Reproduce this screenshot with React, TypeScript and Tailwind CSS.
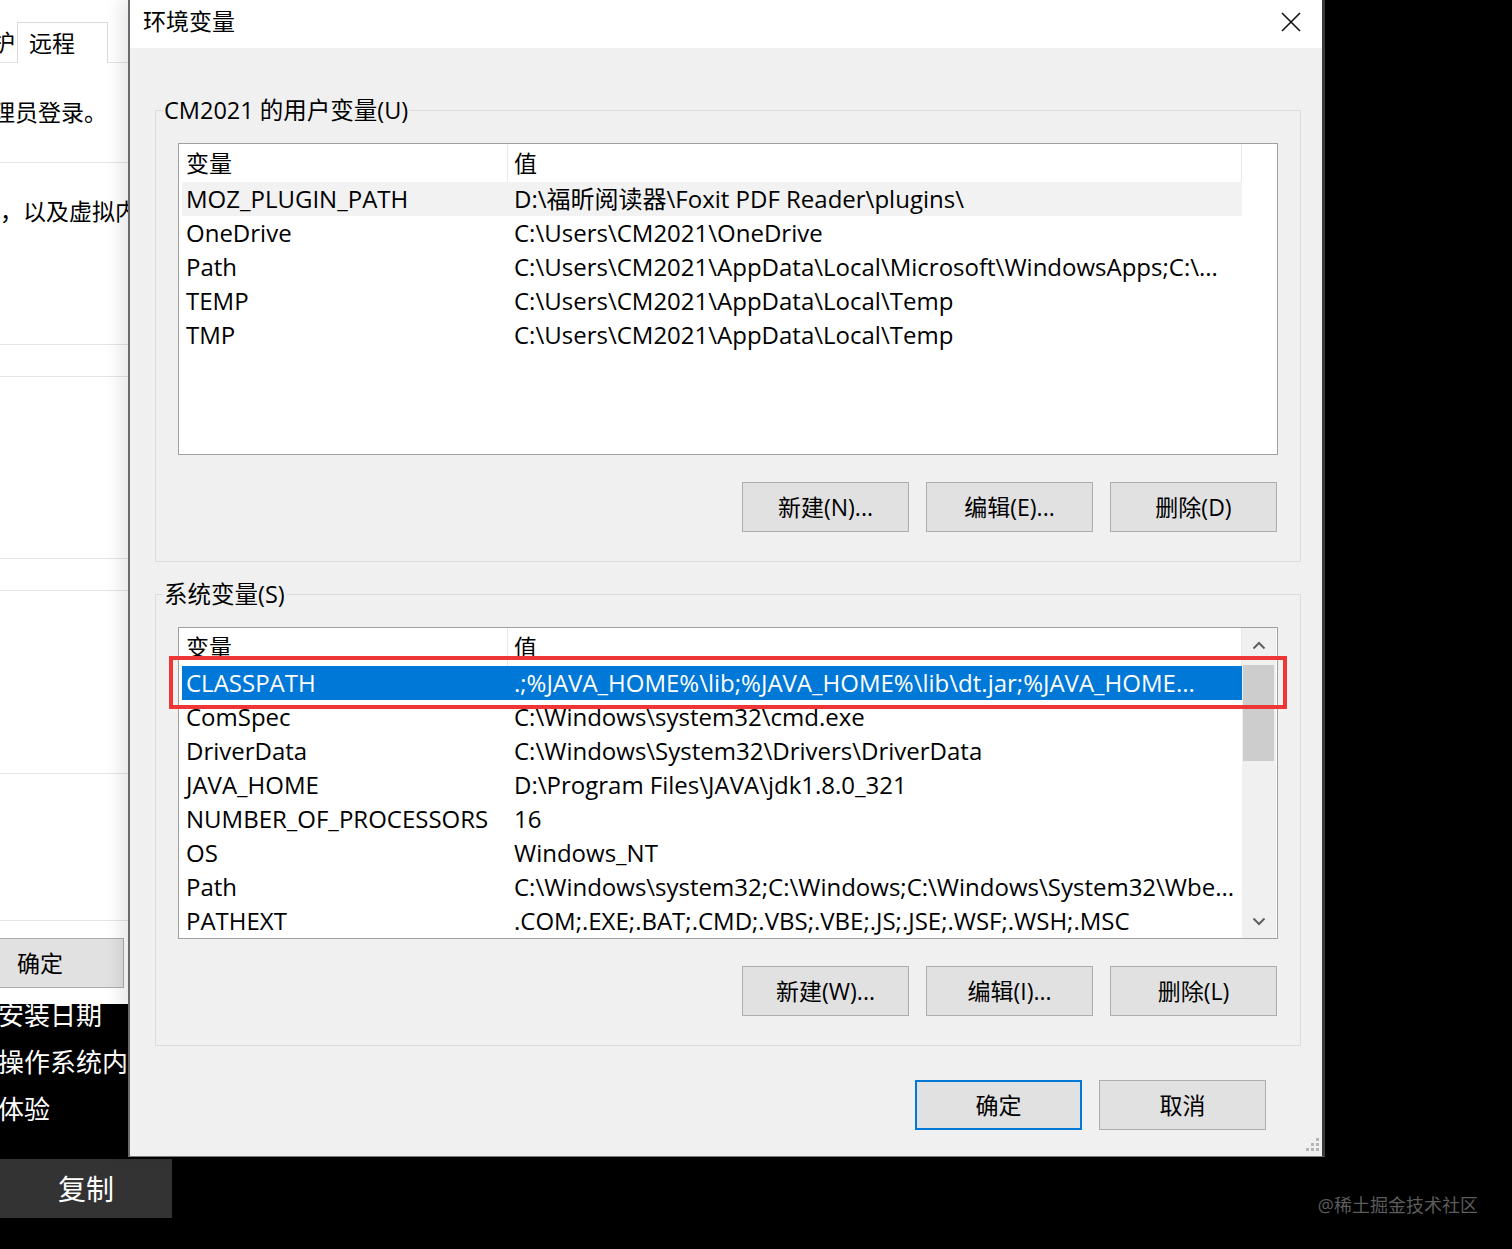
import React from "react";

type Row = [string, string];

const userRows: Row[] = [
  ["MOZ_PLUGIN_PATH", "D:\\福昕阅读器\\Foxit PDF Reader\\plugins\\"],
  ["OneDrive", "C:\\Users\\CM2021\\OneDrive"],
  ["Path", "C:\\Users\\CM2021\\AppData\\Local\\Microsoft\\WindowsApps;C:\\..."],
  ["TEMP", "C:\\Users\\CM2021\\AppData\\Local\\Temp"],
  ["TMP", "C:\\Users\\CM2021\\AppData\\Local\\Temp"],
];

const sysRows: Row[] = [
  ["CLASSPATH", ".;%JAVA_HOME%\\lib;%JAVA_HOME%\\lib\\dt.jar;%JAVA_HOME..."],
  ["ComSpec", "C:\\Windows\\system32\\cmd.exe"],
  ["DriverData", "C:\\Windows\\System32\\Drivers\\DriverData"],
  ["JAVA_HOME", "D:\\Program Files\\JAVA\\jdk1.8.0_321"],
  ["NUMBER_OF_PROCESSORS", "16"],
  ["OS", "Windows_NT"],
  ["Path", "C:\\Windows\\system32;C:\\Windows;C:\\Windows\\System32\\Wbe..."],
  ["PATHEXT", ".COM;.EXE;.BAT;.CMD;.VBS;.VBE;.JS;.JSE;.WSF;.WSH;.MSC"],
];

function Btn({ label, focused }: { label: string; focused?: boolean }) {
  return (
    <button
      className={
        focused
          ? "w-[167px] h-[50px] bg-[#e1e1e1] border-2 border-[#0078d7] text-[23px] text-black leading-none"
          : "w-[167px] h-[50px] bg-[#e1e1e1] border border-[#adadad] text-[23px] text-black leading-none"
      }
    >
      {label}
    </button>
  );
}

function Chevron({ down }: { down?: boolean }) {
  return (
    <svg width="14" height="9" viewBox="0 0 14 9">
      <polyline
        points={down ? "1.5,1.5 7,7 12.5,1.5" : "1.5,7.5 7,2 12.5,7.5"}
        fill="none"
        stroke="#606060"
        strokeWidth="2"
      />
    </svg>
  );
}

function Scrollbar() {
  return (
    <div className="w-[34px] bg-[#f0f0f0] flex flex-col shrink-0">
      <div className="h-[34px] flex items-center justify-center">
        <Chevron />
      </div>
      <div className="ml-[1px] mr-[2px] mt-[3px] h-[96px] bg-[#cdcdcd]" />
      <div className="flex-1" />
      <div className="h-[34px] flex items-center justify-center">
        <Chevron down />
      </div>
    </div>
  );
}

function ListView({ rows, hot, selected, scroll }: { rows: Row[]; hot?: number; selected?: number; scroll?: boolean }) {
  return (
    <div className="h-[312px] border border-[#a0a0a0] bg-white flex overflow-hidden">
      <div className="w-[1063px] pl-[3px] flex flex-col shrink-0">
        <div className="h-[38px] flex shrink-0">
          <div className="w-[326px] pl-[4px] border-r border-[#e8e8e8] flex items-center">变量</div>
          <div className="w-[734px] pl-[6px] border-r border-[#e8e8e8] flex items-center">值</div>
        </div>
        {rows.map(([k, v], i) => (
          <div
            key={k + i}
            className={
              i === selected
                ? "h-[34px] shrink-0 flex items-center bg-[#0078d7] text-white text-[24px]"
                : i === hot
                  ? "h-[34px] shrink-0 flex items-center bg-[#f2f2f2] text-[24px]"
                  : "h-[34px] shrink-0 flex items-center text-[24px]"
            }
          >
            <div className="w-[326px] pl-[4px] whitespace-nowrap overflow-hidden">{k}</div>
            <div className="w-[734px] pl-[6px] whitespace-nowrap overflow-hidden">{v}</div>
          </div>
        ))}
      </div>
      {scroll ? <Scrollbar /> : <div className="flex-1" />}
    </div>
  );
}

function Group({ label, children }: { label: string; children: React.ReactNode }) {
  return (
    <div className="relative w-[1146px] border border-[#dcdcdc] px-[22px] pt-[32px] pb-[29px]">
      <div className="absolute -top-[16px] left-[7px] px-[1px] bg-[#f0f0f0] leading-[30px] text-[23.5px]">{label}</div>
      {children}
    </div>
  );
}

function LeftWindow() {
  return (
    <div className="w-[128px] flex flex-col shrink-0 overflow-hidden">
      <div className="h-[1004px] bg-white text-[23px] text-black flex flex-col overflow-hidden">
        <div className="h-[63px] flex items-end border-b border-[#e3e3e3] shrink-0">
          <div className="w-[17px] h-[40px] flex justify-end items-center overflow-hidden">
            <span className="whitespace-nowrap pr-[2px]">系统保护</span>
          </div>
          <div className="w-[91px] h-[41px] -mb-[1px] border border-b-0 border-[#dadada] bg-white flex items-center pl-[11px]">
            远程
          </div>
        </div>
        <div className="h-[100px] border-b border-[#e5e5e5] flex items-center shrink-0">
          <span className="whitespace-nowrap -ml-[77px]">作为管理员登录。</span>
        </div>
        <div className="h-[182px] border-b border-[#e5e5e5] pt-[31px] shrink-0">
          <span className="whitespace-nowrap">，以及虚拟内存</span>
        </div>
        <div className="h-[32px] border-b border-[#e5e5e5] shrink-0" />
        <div className="h-[182px] border-b border-[#e5e5e5] shrink-0" />
        <div className="h-[32px] border-b border-[#e5e5e5] shrink-0" />
        <div className="h-[183px] border-b border-[#e5e5e5] shrink-0" />
        <div className="h-[147px] border-b border-[#e5e5e5] shrink-0" />
        <div className="pt-[17px] flex justify-end pr-[4px]">
          <button className="w-[168px] h-[50px] shrink-0 bg-[#e1e1e1] border border-[#adadad] text-[23px] leading-none">
            确定
          </button>
        </div>
      </div>
      <div className="flex-1 overflow-hidden text-white text-[26px] leading-[47px]">
        <div className="-mt-[12px] -ml-[2px] whitespace-nowrap">
          <div>安装日期</div>
          <div>操作系统内部版本</div>
          <div>体验</div>
        </div>
      </div>
    </div>
  );
}

export default function App() {
  return (
    <div className="w-[1512px] h-[1249px] bg-black overflow-hidden font-['Open_Sans','Noto_Sans_CJK_SC',sans-serif] text-black">
      <div className="h-[1157px] flex">
        <LeftWindow />
        <div className="relative w-[1197px] shrink-0 bg-[#f0f0f0] border-l-2 border-r-[3px] border-b border-l-[#6a6a6a] border-r-[#3a3a3a] border-b-[#7a7a7a] shadow-[-10px_0_14px_rgba(0,0,0,0.08)] flex flex-col text-[23px]">
          <div className="h-[48px] bg-white flex items-center justify-between pl-[13px] pr-[20px] shrink-0">
            <span className="-mt-[5px]">环境变量</span>
            <svg width="22" height="22" viewBox="0 0 22 22" className="-mt-[4px]">
              <path d="M2 2 L20 20 M20 2 L2 20" stroke="#111" strokeWidth="1.6" fill="none" />
            </svg>
          </div>
          <div className="pl-[25px] pt-[62px] flex flex-col">
            <Group label="CM2021 的用户变量(U)">
              <ListView rows={userRows} hot={0} />
              <div className="mt-[27px] flex justify-end gap-[17px] -mr-[1px] pr-[2px]">
                <Btn label="新建(N)..." />
                <Btn label="编辑(E)..." />
                <Btn label="删除(D)" />
              </div>
            </Group>
            <div className="mt-[32px]">
              <Group label="系统变量(S)">
                <div className="relative">
                  <ListView rows={sysRows} selected={0} scroll />
                  <div className="absolute -left-[9px] top-[29px] w-[1118px] h-[53px] border-[4px] border-[#ef3636]" />
                </div>
                <div className="mt-[27px] flex justify-end gap-[17px] -mr-[1px] pr-[2px]">
                  <Btn label="新建(W)..." />
                  <Btn label="编辑(I)..." />
                  <Btn label="删除(L)" />
                </div>
              </Group>
            </div>
            <div className="mt-[34px] flex justify-end gap-[17px] pr-[56px]">
              <Btn label="确定" focused />
              <Btn label="取消" />
            </div>
          </div>
          <svg width="16" height="16" viewBox="0 0 16 16" className="absolute right-[2px] bottom-[4px]">
            <g fill="#b5b5b5">
              <rect x="12" y="2" width="3" height="3" />
              <rect x="7" y="7" width="3" height="3" />
              <rect x="12" y="7" width="3" height="3" />
              <rect x="2" y="12" width="3" height="3" />
              <rect x="7" y="12" width="3" height="3" />
              <rect x="12" y="12" width="3" height="3" />
            </g>
          </svg>
        </div>
      </div>
      <div className="flex items-start">
        <div className="mt-[2px] w-[172px] h-[59px] bg-[#333333] text-white text-[28px] flex items-center justify-center">
          复制
        </div>
        <div className="ml-auto mr-[34px] mt-[36px] text-[18px] leading-[24px] text-[#5c5c5c]">@稀土掘金技术社区</div>
      </div>
    </div>
  );
}
